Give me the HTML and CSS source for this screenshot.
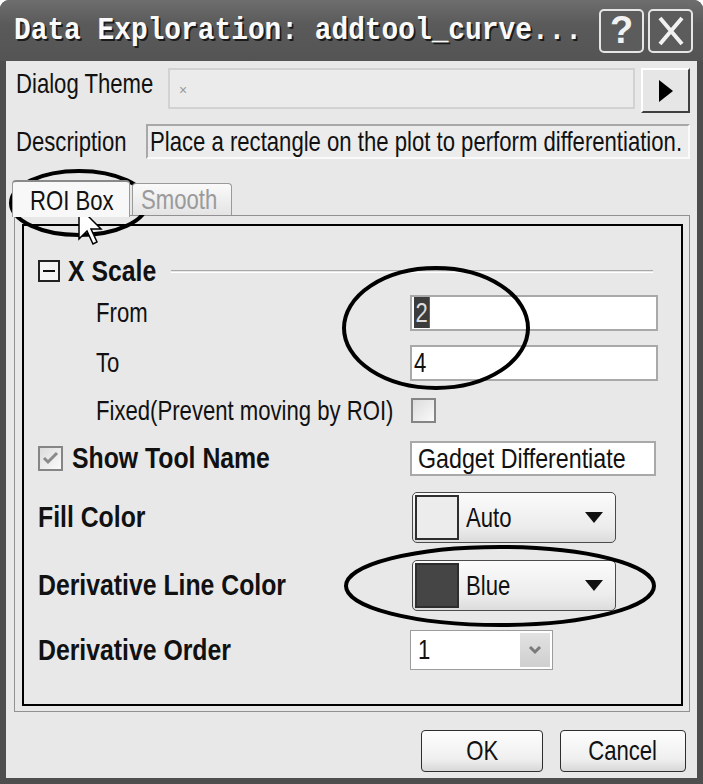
FILE: index.html
```html
<!DOCTYPE html>
<html lang="en">

<head>
    <meta charset="UTF-8">
    <meta name="viewport" content="width=device-width, initial-scale=1.0">
    <title>Data Exploration</title>
    <link rel="stylesheet" href="styles.css">
</head>

<body>
    <div class="window">
        <div class="titlebar">
            <div class="title-wrap"><span class="title">Data Exploration: addtool_curve...</span></div>
            <div class="title-buttons">
                <span class="tbtn help">?</span>
                <span class="tbtn">
                    <svg width="30" height="32" viewBox="0 0 30 32">
                        <path d="M4 3 L26 29 M26 3 L4 29" stroke="#f2f2f2" stroke-width="4" fill="none"/>
                    </svg>
                </span>
            </div>
        </div>

        <div class="client">
            <div class="theme-row">
                <span class="lbl theme-lbl"><span class="t">Dialog Theme</span></span>
                <div class="theme-box"><span class="theme-x">×</span></div>
                <div class="arrow-btn">
                    <svg width="16" height="24" viewBox="0 0 16 24"><path d="M1 1 L15 12 L1 23 Z" fill="#000"/></svg>
                </div>
            </div>

            <div class="desc-row">
                <span class="lbl desc-lbl"><span class="t">Description</span></span>
                <div class="desc-box"><span class="t">Place a rectangle on the plot to perform differentiation.</span></div>
            </div>

            <div class="tabs">
                <div class="tab active"><span class="t">ROI Box</span></div>
                <div class="tab"><span class="t">Smooth</span></div>
            </div>

            <div class="panel">
                <div class="panel-inner">
                    <div class="section">
                        <span class="minus-box"></span>
                        <span class="tb">X Scale</span>
                        <span class="section-line"></span>
                    </div>

                    <div class="row from-row">
                        <span class="lbl sub"><span class="t">From</span></span>
                        <div class="input wide"><span class="t"><span class="sel">2</span></span></div>
                    </div>

                    <div class="row to-row">
                        <span class="lbl sub"><span class="t">To</span></span>
                        <div class="input wide"><span class="t">4</span></div>
                    </div>

                    <div class="row fixed-row">
                        <span class="lbl sub"><span class="t">Fixed(Prevent moving by ROI)</span></span>
                        <span class="check"></span>
                    </div>

                    <div class="row show-row">
                        <span class="lbl lbl-check">
                            <span class="check checked">
                                <svg width="17" height="15" viewBox="0 0 17 15"><path d="M2 7 L6 11 L15 2" stroke="#8a8a8a" stroke-width="3" fill="none"/></svg>
                            </span>
                            <span class="tb">Show Tool Name</span>
                        </span>
                        <div class="input name"><span class="t">Gadget Differentiate</span></div>
                    </div>

                    <div class="row fill-row">
                        <span class="lbl"><span class="tb">Fill Color</span></span>
                        <div class="color-btn">
                            <span class="swatch light"></span>
                            <span class="color-name"><span class="t">Auto</span></span>
                            <span class="down-tri"></span>
                        </div>
                    </div>

                    <div class="row line-row">
                        <span class="lbl"><span class="tb">Derivative Line Color</span></span>
                        <div class="color-btn">
                            <span class="swatch dark"></span>
                            <span class="color-name"><span class="t">Blue</span></span>
                            <span class="down-tri"></span>
                        </div>
                    </div>

                    <div class="row order-row">
                        <span class="lbl"><span class="tb">Derivative Order</span></span>
                        <div class="combo">
                            <span class="combo-val"><span class="t">1</span></span>
                            <span class="combo-btn">
                                <svg width="14" height="10" viewBox="0 0 14 10"><path d="M2 2 L7 7 L12 2" stroke="#7a7a7a" stroke-width="3" fill="none"/></svg>
                            </span>
                        </div>
                    </div>
                </div>
            </div>

            <div class="actions">
                <div class="btn ok"><span class="t c">OK</span></div>
                <div class="btn cancel"><span class="t c">Cancel</span></div>
            </div>
        </div>

        <!-- hand drawn marks over the screenshot -->
        <svg class="marks" width="703" height="784" viewBox="0 0 703 784">
            <ellipse cx="79" cy="203" rx="68" ry="32" fill="none" stroke="#000" stroke-width="4"/>
            <ellipse cx="436" cy="328" rx="92" ry="60" fill="none" stroke="#000" stroke-width="4"/>
            <ellipse cx="500" cy="586" rx="154" ry="39" fill="none" stroke="#000" stroke-width="4"/>
            <path d="M79 207 L79 239 L87 231 L93 244 L97 242 L91 229 L101 229 Z" fill="#fff" stroke="#000" stroke-width="1.5"/>
        </svg>
    </div>
</body>

</html>
```

FILE: styles.css
```css
body {
    margin: 0;
    background: #fff;
}

.window {
    position: relative;
    width: 703px;
    height: 784px;
    background: #4e4e4e;
    border-radius: 9px 9px 0 0;
    overflow: hidden;
    font-family: "Liberation Sans", Arial, sans-serif;
    font-size: 28px;
    color: #111;
}

/* narrow text, the screenshot is squeezed sideways */
.t {
    display: inline-block;
    white-space: nowrap;
    transform: scaleX(0.79);
    transform-origin: 0 50%;
}

.t.c {
    transform-origin: 50% 50%;
}

.tb {
    display: inline-block;
    white-space: nowrap;
    font-weight: bold;
    font-size: 29px;
    transform: scaleX(0.855);
    transform-origin: 0 50%;
}

/* Title bar */
.titlebar {
    height: 61px;
    display: flex;
    align-items: center;
    justify-content: space-between;
    padding: 0 10px 0 14px;
    background: linear-gradient(#6e6e6e, #5a5a5a 40%, #545454);
}

.title-wrap {
    width: 570px;
    flex-shrink: 0;
}

.title {
    display: inline-block;
    font-family: "Liberation Mono", monospace;
    font-weight: bold;
    font-size: 32px;
    color: #fafafa;
    text-shadow: 2px 2px 0 #1a1a1a;
    white-space: nowrap;
    transform: scaleX(0.87);
    transform-origin: 0 50%;
}

.title-buttons {
    display: flex;
    gap: 4px;
}

.tbtn {
    width: 41px;
    height: 40px;
    border: 2px solid #e6e6e6;
    border-radius: 5px;
    background: #5c5c5c;
    display: flex;
    align-items: center;
    justify-content: center;
    color: #f2f2f2;
}

.help {
    font-size: 38px;
    font-weight: bold;
}

/* Client area */
.client {
    margin: 0 6px;
    height: 717px;
    background: #e8e8e8;
    overflow: hidden;
}

.lbl {
    white-space: nowrap;
}

.theme-row {
    display: flex;
    align-items: flex-start;
    margin-top: 7px;
    padding-left: 10px;
}

.theme-lbl {
    width: 152px;
    line-height: 32px;
}

.theme-box {
    width: 463px;
    height: 37px;
    border: 2px solid #d2d2d2;
    background: #ebebeb;
}

.theme-x {
    font-size: 14px;
    color: #999;
    margin-left: 9px;
    line-height: 34px;
}

.arrow-btn {
    width: 45px;
    height: 41px;
    margin-left: 6px;
    border: 2px solid;
    border-color: #fff #404040 #404040 #fff;
    background: #e6e6e6;
    display: flex;
    align-items: center;
    justify-content: center;
}

.desc-row {
    display: flex;
    align-items: center;
    margin-top: 11px;
    padding-left: 10px;
}

.desc-lbl {
    width: 130px;
}

.desc-box {
    width: 538px;
    height: 31px;
    border: 2px solid;
    border-color: #a8a8a8 #fafafa #fafafa #a8a8a8;
    background: #ececec;
    padding-left: 2px;
    line-height: 31px;
    white-space: nowrap;
    overflow: hidden;
}

/* Tabs */
.tabs {
    display: flex;
    align-items: flex-end;
    margin-top: 21px;
    padding-left: 6px;
    height: 37px;
    margin-bottom: -2px;
    position: relative;
    z-index: 1;
}

.tab {
    height: 31px;
    width: 90px;
    border: 1px solid #9a9a9a;
    border-bottom: none;
    border-radius: 4px 4px 0 0;
    background: linear-gradient(#fafafa, #e4e4e4);
    color: #9a9a9a;
    padding-left: 8px;
    line-height: 31px;
    margin-bottom: 2px;
}

.tab.active {
    height: 35px;
    width: 99px;
    padding-left: 17px;
    margin-bottom: 0;
    margin-right: 2px;
    background: #f8f8f8;
    color: #111;
    line-height: 38px;
    border-top: 2px solid #8a8a8a;
}

/* Tab page */
.panel {
    margin: 0 7px 0 8px;
    height: 482px;
    border: 1px solid #919191;
    padding: 8px 6px 5px 7px;
}

.panel-inner {
    height: 478px;
    border: 2px solid #000;
    padding-left: 14px;
}

.section {
    display: flex;
    align-items: center;
    margin-top: 33px;
    height: 24px;
}

.minus-box {
    width: 18px;
    height: 18px;
    border: 2px solid #222;
    background: #f5f5f5;
    position: relative;
    margin-right: 8px;
    flex-shrink: 0;
}

.minus-box::after {
    content: "";
    position: absolute;
    left: 3px;
    right: 3px;
    top: 8px;
    height: 2px;
    background: #111;
}

.section-line {
    flex: 1;
    height: 1px;
    border-top: 1px solid #a8a8a8;
    border-bottom: 1px solid #fff;
    margin: 0 28px 0 0;
}

.row {
    display: flex;
    align-items: center;
}

.row > .lbl {
    width: 372px;
    flex-shrink: 0;
}

.sub {
    padding-left: 58px;
    box-sizing: border-box;
}

.input {
    height: 32px;
    border: 2px solid #a9a9a9;
    background: #fff;
    line-height: 32px;
    padding-left: 2px;
    white-space: nowrap;
    overflow: hidden;
}

.wide {
    width: 242px;
}

.sel {
    background: #3c3c3c;
    color: #ddd;
    padding: 0 2px;
}

.from-row {
    margin-top: 12px;
    height: 36px;
}

.to-row {
    margin-top: 14px;
    height: 36px;
}

.fixed-row {
    margin-top: 17px;
    height: 25px;
}

.check {
    width: 21px;
    height: 21px;
    border: 2px solid #858585;
    background: linear-gradient(135deg, #dcdcdc, #fafafa);
    display: inline-flex;
    align-items: center;
    justify-content: center;
    margin-left: 1px;
    flex-shrink: 0;
}

.show-row {
    margin-top: 18px;
    height: 35px;
}

.lbl-check {
    display: flex;
    align-items: center;
    gap: 9px;
}

.lbl-check .check {
    margin-left: 0;
}

.name {
    width: 236px;
    height: 31px;
    line-height: 31px;
    padding-left: 6px;
}

.name .t {
    transform: scaleX(0.83);
}

.fill-row {
    margin-top: 16px;
    height: 51px;
}

.line-row {
    margin-top: 17px;
    height: 51px;
}

.fill-row > .lbl,
.line-row > .lbl {
    width: 374px;
}

.color-btn {
    width: 200px;
    height: 49px;
    border: 1px solid #4a4a4a;
    border-radius: 5px;
    background: linear-gradient(#fbfbfb, #ececec 70%, #dcdcdc);
    display: flex;
    align-items: center;
    padding-left: 2px;
}

.swatch {
    width: 40px;
    height: 41px;
    border: 2px solid #2e2e2e;
    flex-shrink: 0;
}

.swatch.light {
    background: #ececec;
}

.swatch.dark {
    background: #454545;
}

.color-name {
    margin-left: 7px;
    width: 119px;
}

.down-tri {
    width: 0;
    height: 0;
    border-left: 9px solid transparent;
    border-right: 9px solid transparent;
    border-top: 11px solid #111;
}

.order-row {
    margin-top: 19px;
    height: 40px;
}

.combo {
    width: 141px;
    height: 38px;
    border: 1px solid #9c9c9c;
    background: #fff;
    display: flex;
    align-items: center;
    justify-content: space-between;
}

.combo-val {
    padding-left: 7px;
}

.combo-btn {
    width: 30px;
    height: 34px;
    margin-right: 2px;
    background: linear-gradient(#e2e2e2, #cfcfcf);
    display: flex;
    align-items: center;
    justify-content: center;
}

/* Bottom buttons */
.actions {
    display: flex;
    justify-content: flex-end;
    gap: 17px;
    margin-top: 18px;
    padding-right: 11px;
}

.btn {
    height: 40px;
    border: 1px solid #2e2e2e;
    border-radius: 4px;
    background: linear-gradient(#fdfdfd, #efefef 70%, #d8d8d8);
    text-align: center;
    line-height: 40px;
}

.ok {
    width: 120px;
}

.cancel {
    width: 124px;
}

.marks {
    position: absolute;
    left: 0;
    top: 0;
    pointer-events: none;
}
```
